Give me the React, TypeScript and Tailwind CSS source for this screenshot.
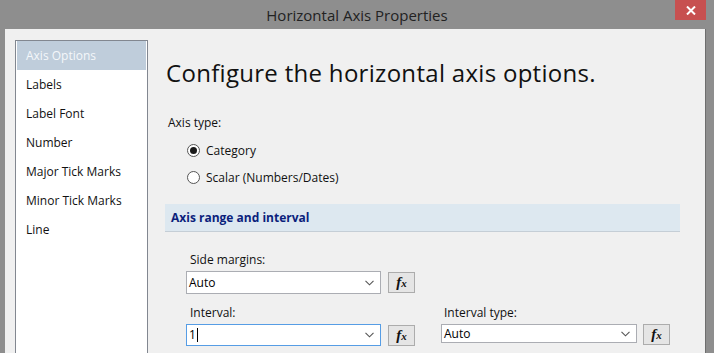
import React from "react";

const font = { fontFamily: '"Open Sans", "Noto Sans", sans-serif' };

function Chevron() {
  return (
    <svg width="9" height="6" viewBox="0 0 9 6" className="shrink-0">
      <path d="M0.5 0.8 L4.5 4.8 L8.5 0.8" fill="none" stroke="#555" strokeWidth="1.1" />
    </svg>
  );
}

function Fx() {
  return (
    <div className="w-[27px] h-[21px] border border-[#acacac] bg-[#e5e5e5] flex items-center justify-center">
      <span className="text-[15px] font-bold italic text-[#111] leading-none" style={{ fontFamily: '"Liberation Serif", serif' }}>
        f<span className="text-[11px]">x</span>
      </span>
    </div>
  );
}

function Combo({ value, w, h, focused, caret }: { value: string; w: string; h: string; focused?: boolean; caret?: boolean }) {
  return (
    <div className={`${w} ${h} bg-white border ${focused ? "border-[#569de5]" : "border-[#abadb3]"} flex items-center pl-[2px] pr-[6px]`}>
      <span className="flex-1 text-[12px] text-black leading-none flex items-center">
        {value}
        {caret && <span className="inline-block w-px h-[14px] bg-black ml-px" />}
      </span>
      <Chevron />
    </div>
  );
}

function Radio({ checked, label }: { checked?: boolean; label: string }) {
  return (
    <div className="flex items-center h-[27px]">
      <div className="w-[13px] h-[13px] rounded-full border border-[#555] bg-white flex items-center justify-center">
        {checked && <div className="w-[7px] h-[7px] rounded-full bg-[#1a1a1a]" />}
      </div>
      <span className="ml-[6px] text-[12px] text-[#111]">{label}</span>
    </div>
  );
}

export default function App() {
  const items = ["Labels", "Label Font", "Number", "Major Tick Marks", "Minor Tick Marks", "Line"];
  return (
    <div className="w-[714px] h-[353px] bg-[#8e8e8e] flex flex-col overflow-hidden" style={font}>
      <div className="h-[29px] shrink-0 flex items-start relative">
        <div className="flex-1 text-center text-[15px] text-[#222] pt-[4px]">Horizontal Axis Properties</div>
        <div className="absolute right-[8px] top-0 w-[31px] h-[20px] bg-[#c75050] flex items-center justify-center">
          <svg width="10" height="9" viewBox="0 0 10 9">
            <path d="M1 0.5 L9 8.5 M9 0.5 L1 8.5" stroke="#fff" strokeWidth="2" />
          </svg>
        </div>
      </div>
      <div className="flex-1 flex pl-[5px] pr-[8px] min-h-0">
        <div className="flex-1 bg-[#f0f0f0] flex border-r border-[#6e6e6e] pl-[10px] pt-[11px]">
          <div className="w-[133px] shrink-0 bg-white border border-[#828790] px-px self-stretch -mb-[2px]">
            <div className="h-[29px] bg-[#bfcddb] flex items-center pl-[9px] text-[12px] text-[#f4f7fa]">Axis Options</div>
            {items.map((t) => (
              <div key={t} className="h-[29px] flex items-center pl-[9px] text-[12px] text-[#111]">{t}</div>
            ))}
          </div>
          <div className="flex flex-col ml-[17px] w-[515px]">
            <div className="text-[24px] tracking-[0.3px] text-[#111] mt-[10px] ml-px leading-[46px]">Configure the horizontal axis options.</div>
            <div className="text-[12px] text-[#111] mt-[18px] ml-[3px]">Axis type:</div>
            <div className="ml-[22px] mt-[5px]">
              <Radio checked label="Category" />
              <Radio label="Scalar (Numbers/Dates)" />
            </div>
            <div className="mt-[13px] h-[28px] bg-[#dde8f0] border-b border-[#c5ced6] flex items-center pl-[6px] text-[12px] font-bold text-[#0b1f7c]">
              Axis range and interval
            </div>
            <div className="ml-[21px] mt-[19px] text-[12px] text-[#111] pl-[4px]">Side margins:</div>
            <div className="ml-[21px] mt-[2px] flex items-center gap-[7px]">
              <Combo value="Auto" w="w-[195px]" h="h-[23px]" />
              <Fx />
            </div>
            <div className="ml-[21px] mt-[10px] flex">
              <div className="flex flex-col w-[255px]">
                <div className="text-[12px] text-[#111] pl-[4px]">Interval:</div>
                <div className="mt-[2px] flex items-center gap-[7px]">
                  <Combo value="1" w="w-[195px]" h="h-[22px]" focused caret />
                  <Fx />
                </div>
              </div>
              <div className="flex flex-col">
                <div className="text-[12px] text-[#111] pl-[3px]">Interval type:</div>
                <div className="mt-[2px] flex items-start gap-[6px]">
                  <Combo value="Auto" w="w-[196px]" h="h-[19px]" />
                  <Fx />
                </div>
              </div>
            </div>
          </div>
        </div>
      </div>
    </div>
  );
}
